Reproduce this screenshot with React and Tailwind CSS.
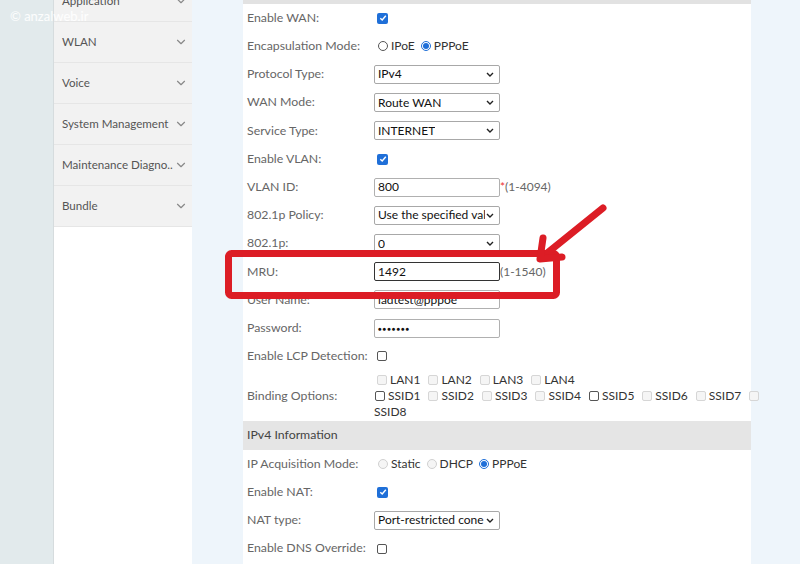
import { ChevronDown } from "lucide-react";

const FONT = { fontFamily: 'Lato, "Noto Sans", Arial, sans-serif' };

const menu = ["Application", "WLAN", "Voice", "System Management", "Maintenance Diagno..", "Bundle"];

function Check({ checked, disabled }) {
  if (checked) {
    return (
      <span className="inline-flex items-center justify-center w-[11px] h-[11px] rounded-[2px] bg-[#1f6fd8]">
        <svg width="8" height="8" viewBox="0 0 8 8">
          <path d="M1.3 4.2 L3.2 6 L6.8 1.8" fill="none" stroke="white" strokeWidth="1.4" />
        </svg>
      </span>
    );
  }
  return (
    <span
      className={
        disabled
          ? "inline-block w-[10px] h-[10px] rounded-[2px] border border-[#d6d6d6] bg-[#f5f5f5]"
          : "inline-block w-[10px] h-[10px] rounded-[2px] border border-[#555]"
      }
    />
  );
}

function Radio({ checked, disabled }) {
  if (checked) {
    return (
      <span className="inline-flex items-center justify-center w-[10px] h-[10px] rounded-full border border-[#1f6fd8]">
        <span className="w-[6px] h-[6px] rounded-full bg-[#1f6fd8]" />
      </span>
    );
  }
  return (
    <span
      className={
        disabled
          ? "inline-block w-[10px] h-[10px] rounded-full border border-[#d0d0d0] bg-[#f5f5f5]"
          : "inline-block w-[10px] h-[10px] rounded-full border border-[#555]"
      }
    />
  );
}

function Select({ value }) {
  return (
    <div className="w-[126px] h-[19px] border border-[#a8a8a8] rounded-[2px] bg-white flex items-center justify-between pl-[3px] pr-[5px] text-[12px] text-[#111] overflow-hidden">
      <span className="whitespace-nowrap overflow-hidden">{value}</span>
      <svg width="8" height="5" viewBox="0 0 8 5" className="shrink-0 ml-[1px]">
        <path d="M1 1 L4 4 L7 1" fill="none" stroke="#222" strokeWidth="1.4" />
      </svg>
    </div>
  );
}

function Input({ value, dark, dots }) {
  return (
    <div
      className={
        "w-[126px] h-[19px] rounded-[2px] bg-white flex items-center pl-[3px] text-[#111] border " +
        (dark ? "border-[#333] " : "border-[#b0b0b0] ") +
        (dots ? "text-[6px] tracking-[1px]" : "text-[12px]")
      }
    >
      {value}
    </div>
  );
}

function Row({ label, children }) {
  return (
    <div className="flex items-center h-[28.2px]">
      <div className="w-[131px] shrink-0 pl-[4px] text-[12.3px] text-[#666] whitespace-nowrap">{label}</div>
      <div className="flex items-center text-[12px] text-[#333]">{children}</div>
    </div>
  );
}

function Opt({ label, disabled }) {
  return (
    <span className="inline-flex items-center gap-[3px] mr-[8px]">
      <Check disabled={disabled} />
      <span>{label}</span>
    </span>
  );
}

export default function App() {
  return (
    <div className="relative w-[800px] h-[564px] overflow-hidden flex bg-[#eef5fb]" style={FONT}>
      <div className="w-[54px] bg-[#e2eaec] border-r border-[#d6dcde]" />

      <aside className="w-[138px] bg-white flex flex-col">
        <div className="mt-[-19px] bg-[#f2f2f2]">
          {menu.map((m) => (
            <div
              key={m}
              className="h-[41px] flex items-center justify-between pl-[8px] pr-[4px] border-b border-[#e6e6e6] text-[11.6px] text-[#555]"
            >
              <span className="whitespace-nowrap">{m}</span>
              <ChevronDown size={14} strokeWidth={2} className="text-[#888] shrink-0" />
            </div>
          ))}
        </div>
      </aside>

      <div className="w-[51px]" />

      <main className="w-[508px] bg-white flex flex-col">
        <div className="h-[4px] bg-[#e2e2e2]" />
        <Row label="Enable WAN:">
          <span className="ml-[3px] flex"><Check checked /></span>
        </Row>
        <Row label="Encapsulation Mode:">
          <span className="ml-[4px] inline-flex items-center gap-[3px] mr-[6px]"><Radio /> IPoE</span>
          <span className="inline-flex items-center gap-[3px]"><Radio checked /> PPPoE</span>
        </Row>
        <Row label="Protocol Type:"><Select value="IPv4" /></Row>
        <Row label="WAN Mode:"><Select value="Route WAN" /></Row>
        <Row label="Service Type:"><Select value="INTERNET" /></Row>
        <Row label="Enable VLAN:">
          <span className="ml-[3px] flex"><Check checked /></span>
        </Row>
        <Row label="VLAN ID:">
          <Input value="800" />
          <span className="text-[#e33]">*</span>
          <span className="text-[#666]">(1-4094)</span>
        </Row>
        <Row label="802.1p Policy:"><Select value="Use the specified valı" /></Row>
        <Row label="802.1p:"><Select value="0" /></Row>
        <Row label="MRU:">
          <Input value="1492" dark />
          <span className="text-[#666]">(1-1540)</span>
        </Row>
        <Row label="User Name:"><Input value="iadtest@pppoe" /></Row>
        <Row label="Password:"><Input value="●●●●●●●" dots /></Row>
        <Row label="Enable LCP Detection:">
          <span className="ml-[3px] flex"><Check /></span>
        </Row>

        <div className="flex items-center h-[51px]">
          <div className="w-[131px] shrink-0 pl-[4px] text-[12.3px] text-[#666] whitespace-nowrap">Binding Options:</div>
          <div className="flex flex-col text-[12px] text-[#333] leading-[16px]">
            <div className="flex items-center pl-[3px]">
              <Opt label="LAN1" disabled />
              <Opt label="LAN2" disabled />
              <Opt label="LAN3" disabled />
              <Opt label="LAN4" disabled />
            </div>
            <div className="flex items-center pl-[1px]">
              <Opt label="SSID1" />
              <Opt label="SSID2" disabled />
              <Opt label="SSID3" disabled />
              <Opt label="SSID4" disabled />
              <Opt label="SSID5" />
              <Opt label="SSID6" disabled />
              <Opt label="SSID7" disabled />
              <Check disabled />
            </div>
            <div>SSID8</div>
          </div>
        </div>

        <div className="h-[28.5px] bg-[#e5e5e5] flex items-center pl-[4px] text-[12.3px] text-[#444]">IPv4 Information</div>

        <Row label="IP Acquisition Mode:">
          <span className="ml-[4px] inline-flex items-center gap-[3px] mr-[6px]"><Radio disabled /> Static</span>
          <span className="inline-flex items-center gap-[3px] mr-[6px]"><Radio disabled /> DHCP</span>
          <span className="inline-flex items-center gap-[3px]"><Radio checked /> PPPoE</span>
        </Row>
        <Row label="Enable NAT:">
          <span className="ml-[3px] flex"><Check checked /></span>
        </Row>
        <Row label="NAT type:"><Select value="Port-restricted cone I" /></Row>
        <Row label="Enable DNS Override:">
          <span className="ml-[3px] flex"><Check /></span>
        </Row>
      </main>

      <div className="flex-1" />

      <div className="absolute left-[10px] top-[7px] text-[13px] text-white/90">© anzalweb.ir</div>

      <svg className="absolute inset-0 pointer-events-none" width="800" height="564">
        <rect x="228.5" y="253.5" width="328" height="42" rx="3" fill="none" stroke="#dc1d25" strokeWidth="7" />
        <line x1="603" y1="208" x2="541" y2="258" stroke="#dc1d25" strokeWidth="7" strokeLinecap="round" />
        <polyline points="543,238 540,259 562,257" fill="none" stroke="#dc1d25" strokeWidth="7" strokeLinecap="round" strokeLinejoin="round" />
      </svg>
    </div>
  );
}
